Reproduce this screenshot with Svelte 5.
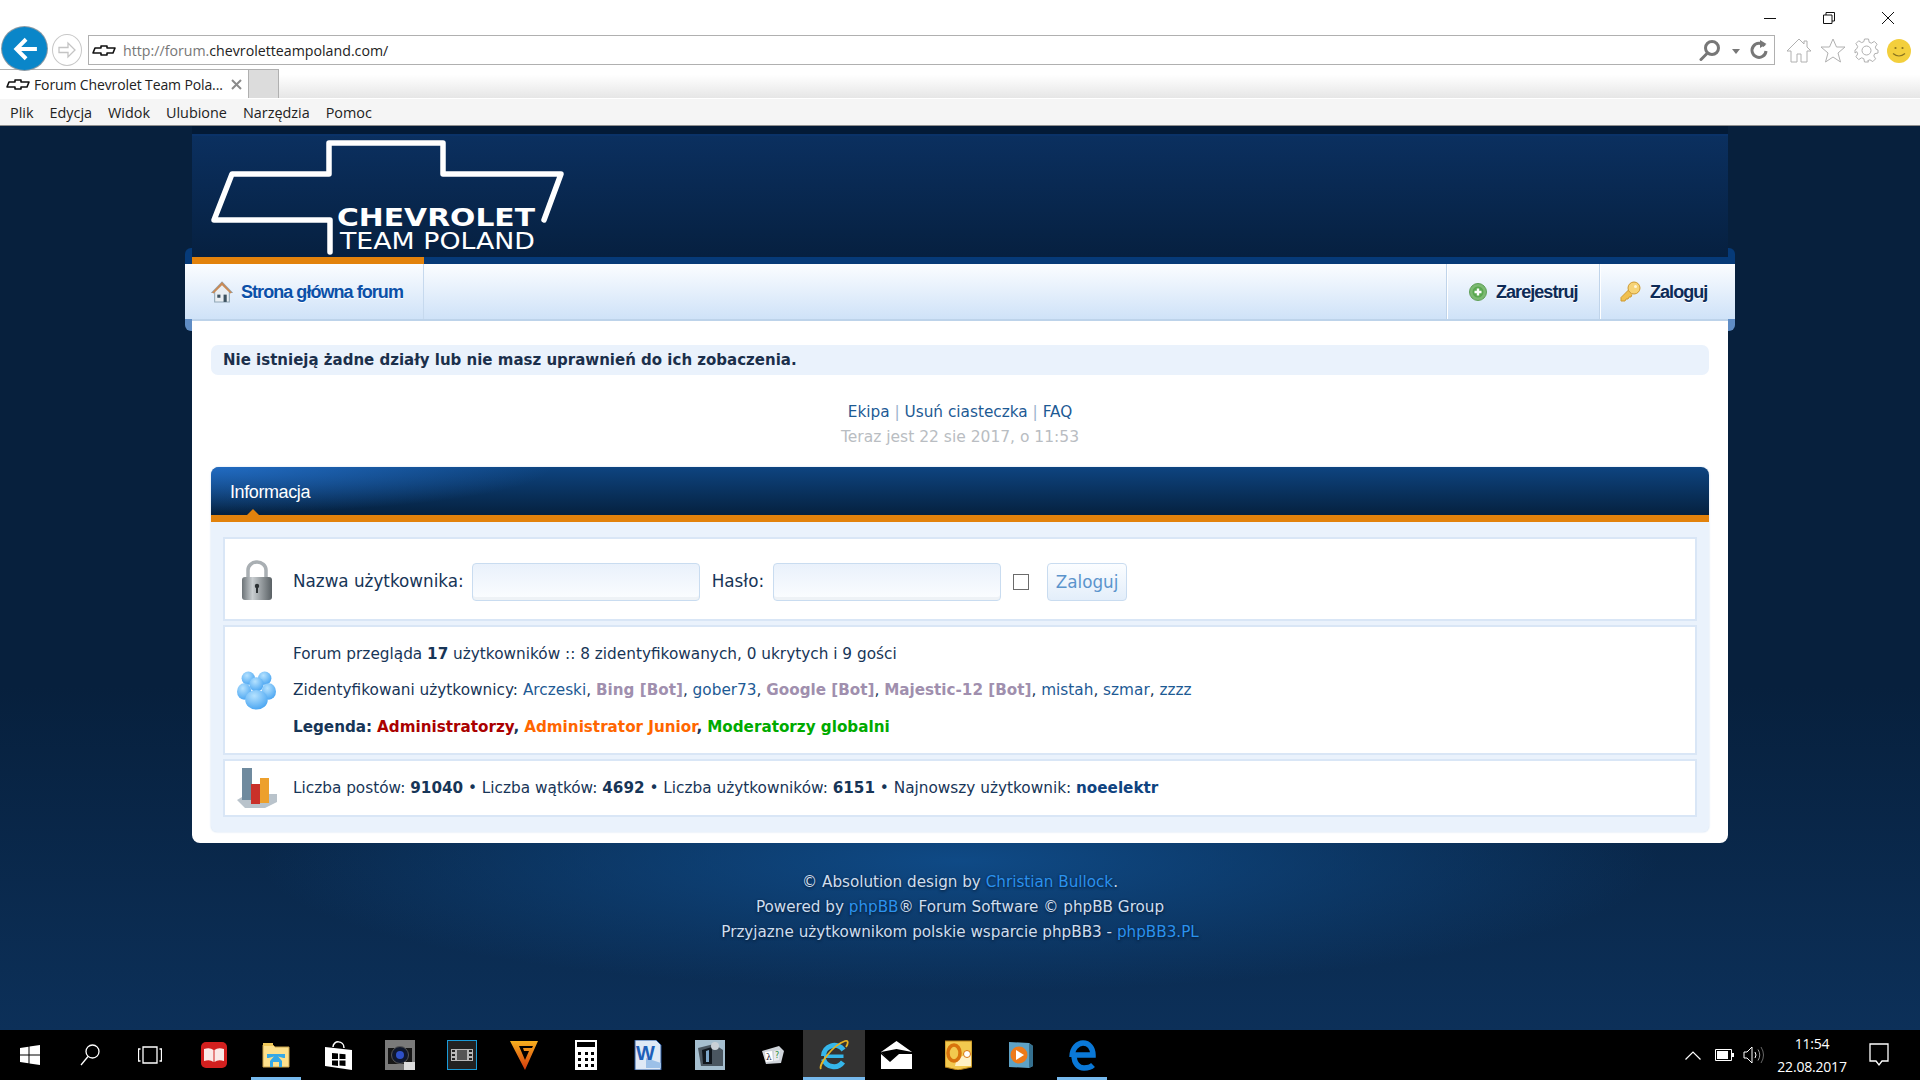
<script>
  const menu = ["Plik", "Edycja", "Widok", "Ulubione", "Narzędzia", "Pomoc"];
</script>

{#snippet bowtie()}
  <svg class="fav" width="24" height="11" viewBox="0 0 24 11">
    <path d="M3 3h6V1h6v2h8l-2 5h-6v2H9V8H1z" fill="#fff" stroke="#111" stroke-width="1.6" stroke-linejoin="round" />
  </svg>
{/snippet}

<div class="screen">
  <header class="browser">
    <div class="captions">
      <svg width="12" height="12" viewBox="0 0 12 12"><path d="M0 6.5h12" stroke="#111" /></svg>
      <svg width="12" height="12" viewBox="0 0 12 12" fill="none" stroke="#111"><path d="M.5 3h8.500v8.500H.5zM3 3V.5h8.500V9H9" /></svg>
      <svg width="12" height="12" viewBox="0 0 12 12"><path d="M0 0l12 12M12 0L0 12" stroke="#111" /></svg>
    </div>
    <div class="toolbar">
      <div class="back">
        <svg width="26" height="26" viewBox="0 0 24 24" fill="none" stroke="#fff" stroke-width="3.600" stroke-linejoin="miter"><path d="M23 12H4M13 3l-9 9 9 9" /></svg>
      </div>
      <div class="forward">
        <svg width="18" height="18" viewBox="0 0 18 18" fill="none" stroke="#c4c4c4" stroke-width="1.300"><path d="M1 6.500h9V2l7 7-7 7v-4.500H1z" /></svg>
      </div>
      <div class="address">
        {@render bowtie()}
        <span class="url"><span class="dim">http://forum.</span>chevroletteampoland.com/</span>
        <div class="addr-tools">
          <svg width="22" height="22" viewBox="0 0 22 22" fill="none" stroke="#777" stroke-width="3"><circle cx="13" cy="9" r="6.500" /><path d="M8.500 14L2 20.500" stroke-linecap="round" /></svg>
          <i class="caret"></i>
          <svg width="20" height="20" viewBox="0 0 20 20" fill="none" stroke="#777" stroke-width="3"><path d="M15.500 6a7 7 0 1 0 1.500 5" /><path d="M11 0v8l6.500-4z" fill="#777" stroke="none" /></svg>
        </div>
      </div>
      <div class="tools">
        <svg width="26" height="25" viewBox="0 0 26 25" fill="#fff" stroke="#b0b0b0"><path d="M13 1L1 13h4v11h6v-8h4v8h6V13h4l-4-4V3h-3v3z" /></svg>
        <svg width="26" height="25" viewBox="0 0 26 25" fill="#fff" stroke="#b0b0b0"><path d="M13 1l3.500 8H25l-7 6 2.500 9L13 19l-7.500 5L8 15 1 9h8.500z" /></svg>
        <svg width="25" height="25" viewBox="0 0 25 25" fill="none" stroke="#b0b0b0"><circle cx="12.500" cy="12.500" r="4.500" /><path d="M10.500 1h4l.7 3.300 2.200.9 2.900-1.800 2.800 2.800-1.800 2.900.9 2.200L24 12v3l-3.300.7-.9 2.200 1.800 2.900-2.800 2.800-2.900-1.800-2.200.9L14.500 24h-4l-.7-3.300-2.200-.9-2.900 1.800-2.800-2.800 1.800-2.900-.9-2.200L1 15v-3l1.800-1.300.9-2.200L1.900 5.600l2.800-2.800 2.900 1.800 2.200-.9z" /></svg>
        <svg width="24" height="24" viewBox="0 0 24 24"><circle cx="12" cy="12" r="12" fill="#f3cf3c" /><circle cx="8.500" cy="9" r="1.100" fill="#8a7420" /><circle cx="15.500" cy="9" r="1.100" fill="#8a7420" /><path d="M6 14.500q6 5 12 0" fill="none" stroke="#8a7420" stroke-width="1.200" /></svg>
      </div>
    </div>
    <div class="tabrow">
      <div class="tab">
        {@render bowtie()}
        <span class="tabtext">Forum Chevrolet Team Pola...</span>
        <svg width="11" height="11" viewBox="0 0 11 11"><path d="M1 1l9 9M10 1l-9 9" stroke="#8a8a8a" stroke-width="2" /></svg>
      </div>
      <div class="newtab"></div>
      <div class="tabfill"></div>
    </div>
    <nav class="menu">
      {#each menu as item}<span>{item}</span>{/each}
    </nav>
  </header>

  <main class="page">
    <div class="wrap">
      <div class="hero">
        <svg width="400" height="123" viewBox="0 0 400 123">
          <path d="M138 118V86H22l18-46h97V9h114v31h118l-17 46" fill="none" stroke="#fff" stroke-width="5.500" stroke-linejoin="round" stroke-linecap="round" />
          <text x="145" y="92" font-family="DejaVu Sans" font-weight="700" font-size="25" fill="#fff" textLength="198" lengthAdjust="spacingAndGlyphs">CHEVROLET</text>
          <text x="148" y="115" font-family="DejaVu Sans" font-size="23" fill="#fff" textLength="195" lengthAdjust="spacingAndGlyphs">TEAM POLAND</text>
        </svg>
      </div>
      <div class="band"><div class="band-on"></div></div>
      <div class="nav">
        <div class="nav-home">
          <svg width="22" height="22" viewBox="0 0 21 21">
            <path d="M10.500 1L1 11h2.500v9h14v-9H20z" fill="#e9eef2" stroke="#8fa6b5" />
            <path d="M10.500 1L1 11l1.500 1 8-8 8 8 1.500-1z" fill="#c98a55" />
            <path d="M12 13h3v7h-3z" fill="#3d5260" /><path d="M6 13h3v3H6z" fill="#3d5260" />
          </svg>
          <span>Strona główna forum</span>
        </div>
        <div class="nav-right">
          <div class="nav-item">
            <svg width="18" height="18" viewBox="0 0 18 18"><circle cx="9" cy="9" r="8.500" fill="#7cba72" stroke="#5f9f58" /><circle cx="9" cy="9" r="5.500" fill="#5aa850" /><path d="M9 5.500v7M5.500 9h7" stroke="#fff" stroke-width="2.400" /></svg>
            <span>Zarejestruj</span>
          </div>
          <div class="nav-item last">
            <svg width="21" height="21" viewBox="0 0 21 21"><path d="M9 8.500L1 16.500V20h4l1-2h2l1-2h2l1-2.500" fill="#f0c050" stroke="#cf9a30" /><circle cx="14" cy="7" r="6" fill="#f6d376" stroke="#cf9a30" /><circle cx="15.500" cy="5.500" r="1.500" fill="#fff6d8" /></svg>
            <span>Zaloguj</span>
          </div>
        </div>
      </div>

      <div class="content">
        <p class="notice">Nie istnieją żadne działy lub nie masz uprawnień do ich zobaczenia.</p>
        <div class="links">
          <p><a>Ekipa</a> <span class="sep">|</span> <a>Usuń ciasteczka</a> <span class="sep">|</span> <a>FAQ</a></p>
          <p class="time">Teraz jest 22 sie 2017, o 11:53</p>
        </div>

        <section class="panel">
          <h2>Informacja</h2>
          <div class="rows">
            <div class="row login">
              <div class="ico">
                <svg width="32" height="40" viewBox="0 0 32 40">
                  <defs><linearGradient id="lk" x1="0" x2="1" y1="0" y2="0"><stop offset="0" stop-color="#6d7478" /><stop offset=".35" stop-color="#c9ced1" /><stop offset="1" stop-color="#596064" /></linearGradient></defs>
                  <path d="M7 18V10a9 8 0 0 1 18 0v8" fill="none" stroke="#a9afb3" stroke-width="3.500" />
                  <rect x="1" y="17" width="30" height="23" rx="3" fill="url(#lk)" />
                  <circle cx="16" cy="26" r="2.200" fill="#2c3134" /><path d="M15 27h2v6h-2z" fill="#2c3134" />
                </svg>
              </div>
              <span class="lab">Nazwa użytkownika:</span>
              <div class="field"></div>
              <span class="lab lab2">Hasło:</span>
              <div class="field"></div>
              <div class="check"></div>
              <div class="btn">Zaloguj</div>
            </div>
            <div class="row who">
              <div class="ico">
                <svg width="39" height="39" viewBox="0 0 38 38">
                  <defs><radialGradient id="us" cx=".4" cy=".3" r=".8"><stop offset="0" stop-color="#b5e2ff" /><stop offset="1" stop-color="#3f9ff0" /></radialGradient></defs>
                  <g fill="url(#us)"><circle cx="11" cy="7" r="6.500" /><circle cx="27" cy="7" r="6.500" /><circle cx="19" cy="13" r="7" /><ellipse cx="7" cy="20" rx="7" ry="8" /><ellipse cx="31" cy="20" rx="7" ry="8" /><ellipse cx="19" cy="28" rx="11" ry="9.500" /></g>
                </svg>
              </div>
              <div class="lines">
                <p>Forum przegląda <b>17</b> użytkowników :: 8 zidentyfikowanych, 0 ukrytych i 9 gości</p>
                <p>Zidentyfikowani użytkownicy: <a>Arczeski</a>, <b class="bot">Bing [Bot]</b>, <a>gober73</a>, <b class="bot">Google [Bot]</b>, <b class="bot">Majestic-12 [Bot]</b>, <a>mistah</a>, <a>szmar</a>, <a>zzzz</a></p>
                <p><b>Legenda:</b> <b class="red">Administratorzy</b><b>,</b> <b class="orange">Administrator Junior</b><b>,</b> <b class="green">Moderatorzy globalni</b></p>
              </div>
            </div>
            <div class="row stats">
              <div class="ico">
                <svg width="40" height="40" viewBox="0 0 40 40">
                  <path d="M0 32l10-6h30v8l-12 6H8z" fill="#b9c3cb" />
                  <path d="M5 0h10v32H5z" fill="#6f8a9e" /><path d="M14 16h9v20h-9z" fill="#c9302a" /><path d="M23 10h9v25h-9z" fill="#eda02c" />
                </svg>
              </div>
              <p>Liczba postów: <b>91040</b> • Liczba wątków: <b>4692</b> • Liczba użytkowników: <b>6151</b> • Najnowszy użytkownik: <b class="newest">noeelektr</b></p>
            </div>
          </div>
        </section>
      </div>

      <footer class="foot">
        <p>© Absolution design by <a>Christian Bullock</a>.</p>
        <p>Powered by <a>phpBB</a>® Forum Software © phpBB Group</p>
        <p>Przyjazne użytkownikom polskie wsparcie phpBB3 - <a>phpBB3.PL</a></p>
      </footer>
    </div>
  </main>

  <div class="taskbar">
    <div class="sys">
      <svg width="20" height="20" viewBox="0 0 20 20" fill="#fff"><path d="M0 3l8.500-1.300V9.500H0zM9.500 1.500L20 0v9.500H9.500zM0 10.500h8.500v7.800L0 17zM9.500 10.500H20V20L9.500 18.500z" /></svg>
    </div>
    <div class="sys">
      <svg width="20" height="22" viewBox="0 0 20 22" fill="none" stroke="#fff" stroke-width="1.300"><circle cx="12.500" cy="7.500" r="6.500" /><path d="M8 12.500L1 21" /></svg>
    </div>
    <div class="sys wide">
      <svg width="24" height="18" viewBox="0 0 24 18" fill="none" stroke="#fff" stroke-width="1.300"><path d="M5 1h14v16H5zM2.500 3H.5v12h2M21.500 3h2v12h-2" /></svg>
    </div>
    <div class="app">
      <svg width="26" height="26" viewBox="0 0 26 26"><rect width="26" height="26" rx="5" fill="#d3201f" /><path d="M3 7q6-2 9.500 1v12Q9 17 3 19zM23 7q-6-2-9.500 1v12q3.500-3 9.500-1z" fill="#fbe9e7" /></svg>
    </div>
    <div class="app on">
      <svg width="28" height="26" viewBox="0 0 28 26"><path d="M1 3h10l2 2h14v20H1z" fill="#fde08c" stroke="#c8a24a" /><path d="M1 1h10v3H1z" fill="#f0c95a" /><path d="M8 19l6-7h0l6 7v6h-3v-5h-6v5H8z" fill="#35a8e6" /><path d="M5 12h18v4h-1.500L14 14l-7.500 2H5z" fill="#35a8e6" /></svg>
    </div>
    <div class="app">
      <svg width="27" height="30" viewBox="0 0 27 30"><path d="M0 7l27 3v20L0 26z" fill="#fff" /><path d="M8 7C8 0 19 0 19 8" fill="none" stroke="#fff" stroke-width="1.500" /><path d="M7 13l6 .6v5.400H7zM14.500 13.700l6 .6V19h-6zM7 20.500h6v5.400l-6-.6zM14.500 20.500h6v5.600l-6-.6z" fill="#000" /></svg>
    </div>
    <div class="app">
      <svg width="30" height="30" viewBox="0 0 30 30"><rect width="30" height="30" fill="#7a7a7a" /><path d="M3 8h24v16H3z" fill="#161616" /><circle cx="15" cy="15" r="8.500" fill="#10182e" stroke="#555" /><circle cx="15" cy="15" r="4" fill="#2e50c8" /><rect x="19" y="22" width="11" height="8" fill="#ddd" /></svg>
    </div>
    <div class="app">
      <svg width="30" height="30" viewBox="0 0 30 30"><rect x=".5" y=".5" width="29" height="29" fill="#222" stroke="#1a9ad8" /><path d="M4 9h22v12H4z" fill="#b8b8b8" /><path d="M10 10h10v10H10z" fill="#555" /><path d="M5 10h3v2H5zM5 14h3v2H5zM5 18h3v2H5zM22 10h3v2h-3zM22 14h3v2h-3zM22 18h3v2h-3z" fill="#222" /></svg>
    </div>
    <div class="app">
      <svg width="28" height="30" viewBox="0 0 28 30"><defs><linearGradient id="vv" x1="0" x2="0" y1="0" y2="1"><stop offset="0" stop-color="#f6b01e" /><stop offset="1" stop-color="#d5380d" /></linearGradient></defs><path d="M0 1h28L15 30zM9 6l6 14 4-9h-5l-1-3h9l1-2z" fill="url(#vv)" fill-rule="evenodd" /></svg>
    </div>
    <div class="app">
      <svg width="22" height="30" viewBox="0 0 22 30"><rect width="22" height="30" fill="#fff" /><rect x="2" y="2" width="18" height="5" fill="#000" /><g fill="#000"><path d="M3 12h3v3H3zM10 12h3v3h-3zM16 12h3v3h-3zM3 18h3v3H3zM10 18h3v3h-3zM16 18h3v3h-3zM3 24h3v3H3zM10 24h3v3h-3zM16 24h3v3h-3z" /></g></svg>
    </div>
    <div class="app">
      <svg width="28" height="30" viewBox="0 0 28 30"><path d="M1 0h21l5 5v25H1z" fill="#dfe9f6" stroke="#2a5aa0" /><path d="M12 18l15 5v5H12z" fill="#9cc0e8" /><text x="2" y="20" font-family="Liberation Sans" font-weight="700" font-size="20" fill="#1e5fb8">W</text></svg>
    </div>
    <div class="app">
      <svg width="30" height="30" viewBox="0 0 30 30"><rect width="30" height="30" fill="#a6bfcf" /><path d="M3 8l16-4 9 6v16H6z" fill="#4a5660" /><path d="M7 10l10-3v17H8z" fill="#10161c" /><path d="M11 11l3-1v12h-3z" fill="#7ea6c8" /><circle cx="20" cy="6" r="4" fill="#c9d0d6" /></svg>
    </div>
    <div class="app">
      <svg width="25" height="20" viewBox="0 0 25 20"><path d="M2 6l17-5 5 5-3 12-15 1z" fill="#cfd4da" /><path d="M5 7l7-1 1 10-7 1z" fill="#fff" /><path d="M14 6l6-1-1 10-5 1z" fill="#e8eaee" /><text x="6" y="15" font-family="DejaVu Serif" font-size="9" fill="#223">λ</text><text x="15" y="13" font-family="DejaVu Sans" font-size="8" fill="#2a8a3a">?</text></svg>
    </div>
    <div class="app ie on">
      <svg width="30" height="32" viewBox="0 0 30 32" fill="none"><path d="M4.500 17a11 11 0 0 1 20-6M24 23a11 11 0 0 1-19.500-3" stroke="#35b6ea" stroke-width="5" /><path d="M5 15.500h19.500v3.500H5z" fill="#35b6ea" /><path d="M2 30C-1 26 14 6 26 2c4-1 3 3 1 6" stroke="#e8b422" stroke-width="1.800" /></svg>
    </div>
    <div class="app">
      <svg width="31" height="28" viewBox="0 0 31 28"><path d="M15.500 0L31 11 18 11 9 19 0 11z" fill="#fff" /><path d="M0 13l9 8 9-8 13 0v15H0z" fill="#fff" /><path d="M0 11l15.500-3 15.500 3-13 1-9 8z" fill="#000" /></svg>
    </div>
    <div class="app">
      <svg width="27" height="30" viewBox="0 0 27 30"><path d="M0 1h27v26l-14 3L0 27z" fill="#f2c94f" stroke="#b57f17" /><path d="M12 18l14-5v13H10z" fill="#fff1c4" /><ellipse cx="9" cy="13" rx="6" ry="8" fill="none" stroke="#d8730d" stroke-width="3.500" /><circle cx="22" cy="14" r="3.500" fill="#fff" stroke="#d8730d" /></svg>
    </div>
    <div class="app">
      <svg width="25" height="28" viewBox="0 0 25 28"><path d="M1 1l20 1 4 3v20l-4 2-20-1z" fill="#5ea2c6" /><path d="M21 2l4 3v20l-4 2z" fill="#35708f" /><circle cx="11" cy="14" r="8.500" fill="#ee7a1a" /><path d="M8 9l8 5-8 5z" fill="#fff" /></svg>
    </div>
    <div class="app on">
      <svg width="27" height="31" viewBox="0 0 27 31" fill="none"><path d="M3 17C3 8 9 3 14 3c6 0 10 5 10 12H5" stroke="#0a78d7" stroke-width="5.500" /><path d="M5 15c0 9 5 13 10 13 4 0 7-1 9-3" stroke="#0a78d7" stroke-width="5.500" /></svg>
    </div>
    <div class="tray">
      <svg width="16" height="9" viewBox="0 0 16 9" fill="none" stroke="#fff" stroke-width="1.200"><path d="M.5 8.500L8 1l7.500 7.500" /></svg>
      <svg class="batt" width="19" height="12" viewBox="0 0 19 12"><path d="M.5.500h16v11H.5z" fill="none" stroke="#fff" /><path d="M2 2h11v8H2z" fill="#fff" /><path d="M17 4h2v4h-2z" fill="#fff" /></svg>
      <svg class="vol" width="22" height="20" viewBox="0 0 22 20" fill="none" stroke="#fff"><path d="M1 7h3l5-5v16l-5-5H1z" /><path d="M12 7q2 3 0 6" /><path d="M15 4.500q3.500 5.500 0 11" stroke="#999" /><path d="M18 2q5 8 0 16" stroke="#666" /></svg>
      <div class="clock"><span>11:54</span><span>22.08.2017</span></div>
      <svg class="note" width="20" height="24" viewBox="0 0 20 24" fill="none" stroke="#fff" stroke-width="1.300"><path d="M1 1h18v17h-6l-3 4-3-4H1z" /></svg>
    </div>
  </div>
</div>

<style>
  :global(body) {
    margin: 0;
    background: #07203d;
  }
  p, h2 {
    margin: 0;
  }
  .screen {
    width: 1920px;
    height: 1080px;
    display: flex;
    flex-direction: column;
    overflow: hidden;
  }

  /* browser chrome */
  .browser {
    height: 126px;
    flex: none;
    background: #fff;
    font-family: "Open Sans", sans-serif;
    font-size: 14px;
    color: #222;
  }
  .captions {
    height: 35px;
    display: flex;
    justify-content: flex-end;
    align-items: flex-start;
    gap: 47px;
    padding: 12px 26px 0 0;
    box-sizing: border-box;
  }
  .toolbar {
    height: 34px;
    display: flex;
    align-items: flex-start;
  }
  .back {
    width: 45px;
    height: 43px;
    margin: -8px 0 0 2px;
    border-radius: 50%;
    background: #0a86c9;
    box-shadow: 0 0 0 1px #8a9aa5;
    display: flex;
    align-items: center;
    justify-content: center;
    position: relative;
    z-index: 1;
  }
  .forward {
    width: 30px;
    height: 32px;
    margin: -1px 0 0 5px;
    border-radius: 50%;
    border: 1px solid #c8c8c8;
    box-sizing: border-box;
    display: flex;
    align-items: center;
    justify-content: center;
  }
  .address {
    width: 1687px;
    height: 30px;
    margin-left: 6px;
    border: 1px solid #b0b0b0;
    box-sizing: border-box;
    display: flex;
    align-items: center;
    padding: 0 3px 0 3px;
  }
  .url {
    margin-left: 7px;
    font-size: 14.200px;
    color: #222;
  }
  .dim {
    color: #777;
  }
  .addr-tools {
    margin-left: auto;
    display: flex;
    align-items: center;
    gap: 7px;
  }
  .addr-tools svg:last-child {
    margin-right: 2px;
  }
  .caret {
    width: 0;
    height: 0;
    border: 4px solid transparent;
    border-top: 5px solid #777;
    border-bottom: 0;
    margin: 2px 2px 0 4px;
  }
  .tools {
    display: flex;
    align-items: center;
    gap: 8px;
    margin: 3px 0 0 11px;
  }
  .tabrow {
    height: 29px;
    display: flex;
  }
  .tab {
    width: 249px;
    border-top: 1px solid #b0b0b0;
    border-right: 1px solid #b0b0b0;
    box-sizing: border-box;
    background: #fff;
    display: flex;
    align-items: center;
    padding-left: 6px;
  }
  .tabtext {
    margin: 0 8px 0 4px;
    letter-spacing: -0.12px;
    white-space: nowrap;
  }
  .newtab {
    width: 30px;
    background: #dcdcdc;
    border-top: 1px solid #b0b0b0;
    border-right: 1px solid #b0b0b0;
    box-sizing: border-box;
  }
  .tabfill {
    flex: 1;
    background: linear-gradient(#fff 20%, #e6e6e6);
  }
  .menu {
    height: 28px;
    box-sizing: border-box;
    padding-left: 10px;
    background: #f5f5f5;
    border-top: 1px solid #fff;
    border-bottom: 1px solid #8f8f8f;
    display: flex;
    align-items: center;
    gap: 16px;
    font-size: 14.400px;
  }

  /* forum page */
  .page {
    flex: 1;
    background:
      radial-gradient(ellipse 700px 130px at 50% 735px, #0f4a86, rgba(15, 74, 134, 0)),
      linear-gradient(#07203d 0, #07203d 62%, #0c3059 100%);
  }
  .wrap {
    width: 1536px;
    margin: 0 auto;
    font-family: "DejaVu Sans", sans-serif;
    color: #173557;
    font-size: 15.300px;
  }
  b {
    font-size: 15.200px;
  }
  .hero {
    height: 123px;
    border-top: 8px solid #031a36;
    box-shadow: inset 0 2px 0 #0a3268;
    background: linear-gradient(#0b3060, #062040);
    box-sizing: content-box;
  }
  .hero svg {
    display: block;
    margin-left: 0;
  }
  .band {
    height: 7px;
    margin: 0 -7px;
    padding: 0 7px;
    background: #063a78;
    position: relative;
  }
  .band::before, .band::after {
    content: "";
    position: absolute;
    bottom: 0;
    width: 7px;
    height: 16px;
    background: #063a78;
  }
  .band::before {
    left: 0;
    border-radius: 6px 0 0 0;
  }
  .band::after {
    right: 0;
    border-radius: 0 6px 0 0;
  }
  .band-on {
    width: 232px;
    height: 7px;
    background: #e2820c;
  }
  .nav {
    height: 57px;
    margin: 0 -7px;
    padding: 0 7px;
    box-sizing: border-box;
    background: linear-gradient(#fbfdff, #cfe2f8);
    border-bottom: 2px solid #bdd3ea;
    display: flex;
    justify-content: space-between;
    font-family: "Liberation Sans", sans-serif;
    font-size: 18px;
    font-weight: 700;
    letter-spacing: -0.95px;
    text-shadow: 0 1px 0 #fff;
    position: relative;
  }
  .nav span {
    padding-top: 1px;
  }
  .nav::before, .nav::after {
    content: "";
    position: absolute;
    bottom: -12px;
    width: 7px;
    height: 12px;
    background: #5f8cc4;
  }
  .nav::before {
    left: 0;
    border-radius: 0 0 0 6px;
  }
  .nav::after {
    right: 0;
    border-radius: 0 0 6px 0;
  }
  .nav-home {
    width: 232px;
    box-sizing: border-box;
    padding-left: 19px;
    border-right: 1px solid #c6d9ee;
    display: flex;
    align-items: center;
    gap: 8px;
    color: #0b50a8;
  }
  .nav-right {
    display: flex;
  }
  .nav-item {
    width: 153px;
    box-sizing: border-box;
    padding-left: 22px;
    border-left: 1px solid #c0d4ea;
    box-shadow: inset 1px 0 0 #fff;
    display: flex;
    align-items: center;
    gap: 9px;
    color: #0d2b57;
  }
  .nav-item.last {
    width: 129px;
    padding-left: 20px;
    gap: 9px;
  }
  .content {
    background: #fff;
    border-radius: 0 0 8px 8px;
    padding: 24px 19px 11px;
  }
  .notice {
    height: 30px;
    line-height: 31px;
    padding-left: 12px;
    border-radius: 7px;
    background: #eaf2fc;
    font-weight: 700;
    font-size: 15px;
    color: #1b2f4b;
  }
  .links {
    margin: 25px 0 17px;
    text-align: center;
    line-height: 25px;
  }
  .links a {
    color: #1d5a94;
  }
  .sep {
    color: #9cb4cc;
  }
  .time {
    color: #b9bdc2;
    font-size: 15.500px;
  }
  .panel {
    background: #eaf2fc;
    border-radius: 8px 8px 6px 6px;
    box-shadow: 0 0 2px #c6d9ee;
    padding-bottom: 15px;
  }
  h2 {
    height: 48px;
    border-bottom: 7px solid #e2820c;
    border-radius: 8px 8px 0 0;
    background:
      radial-gradient(ellipse 340px 46px at 0 0, rgba(40, 120, 215, 0.75), rgba(40, 120, 215, 0)),
      linear-gradient(#0e4480, #05213f);
    color: #fff;
    font: 400 18px/50px "Liberation Sans", sans-serif;
    letter-spacing: -0.4px;
    padding-left: 19px;
    position: relative;
  }
  h2::after {
    content: "";
    position: absolute;
    left: 36px;
    bottom: 0;
    border: 6px solid transparent;
    border-bottom-color: #e2820c;
    border-top: 0;
  }
  .rows {
    margin: 15px 12px 0;
    display: flex;
    flex-direction: column;
    gap: 4px;
  }
  .row {
    background: #fff;
    border: 2px solid #d9e6f6;
    box-sizing: border-box;
    display: flex;
    align-items: center;
  }
  .ico {
    width: 68px;
    flex: none;
    box-sizing: border-box;
    display: flex;
    justify-content: center;
    padding-right: 5px;
  }
  .login {
    height: 84px;
  }
  .login .ico {
    padding-top: 2px;
  }
  .lab {
    font-size: 16.800px;
    margin-right: 8px;
    padding-top: 3px;
  }
  .lab2 {
    margin: 0 9px 0 12px;
  }
  .field {
    width: 228px;
    height: 38px;
    margin-top: 5px;
    box-sizing: border-box;
    border: 1px solid #c9dcf0;
    border-radius: 4px;
    background: linear-gradient(#e9f1fb, #fbfdff);
    box-shadow: inset 0 -3px 0 #eef2f6;
  }
  .check {
    width: 16px;
    height: 16px;
    box-sizing: border-box;
    margin: 5px 18px 0 12px;
    border: 1px solid #6b6b6b;
    background: #fff;
  }
  .btn {
    width: 80px;
    height: 38px;
    margin-top: 5px;
    box-sizing: border-box;
    border: 1px solid #c9dcf0;
    border-radius: 4px;
    background: linear-gradient(#fbfdff, #e3eefa);
    color: #5b94cc;
    font-size: 16.800px;
    line-height: 37px;
    text-align: center;
  }
  .who {
    height: 130px;
  }
  .lines {
    line-height: 36.500px;
    padding-top: 1px;
  }
  .lines a {
    color: #1d5a94;
  }
  .bot {
    color: #a08fae;
  }
  .red {
    color: #aa0000;
  }
  .orange {
    color: #ff6600;
  }
  .green {
    color: #00aa00;
  }
  .stats {
    height: 58px;
  }
  .newest {
    color: #0f4380;
  }
  .foot {
    padding-top: 27px;
    text-align: center;
    line-height: 25px;
    font-size: 15.200px;
    color: #cfdeef;
    text-shadow: 0 1px 3px #04172e;
  }
  .foot a {
    color: #2b92ee;
  }

  /* windows taskbar */
  .taskbar {
    height: 50px;
    flex: none;
    background: #000;
    display: flex;
    color: #fff;
    font-family: "Open Sans", sans-serif;
    font-size: 14px;
  }
  .sys {
    width: 60px;
    box-sizing: border-box;
    display: flex;
    align-items: center;
    justify-content: center;
  }
  .sys.wide {
    width: 63px;
    padding-right: 3px;
  }
  .app {
    width: 62px;
    display: flex;
    align-items: center;
    justify-content: center;
    box-sizing: border-box;
    position: relative;
  }
  .app.on::after {
    content: "";
    position: absolute;
    left: 6px;
    right: 6px;
    bottom: 0;
    height: 3px;
    background: #76b9ed;
  }
  .app.ie {
    background: #333;
  }
  .app.ie::after {
    left: 0;
    right: 0;
  }
  .tray {
    margin-left: auto;
    display: flex;
    align-items: center;
    padding-right: 31px;
  }
  .batt {
    margin-left: 14px;
  }
  .vol {
    margin-left: 9px;
  }
  .clock {
    width: 80px;
    margin-left: 7px;
    display: flex;
    flex-direction: column;
    align-items: center;
    line-height: 23px;
    letter-spacing: -0.2px;
  }
  .note {
    margin-left: 17px;
  }
</style>
